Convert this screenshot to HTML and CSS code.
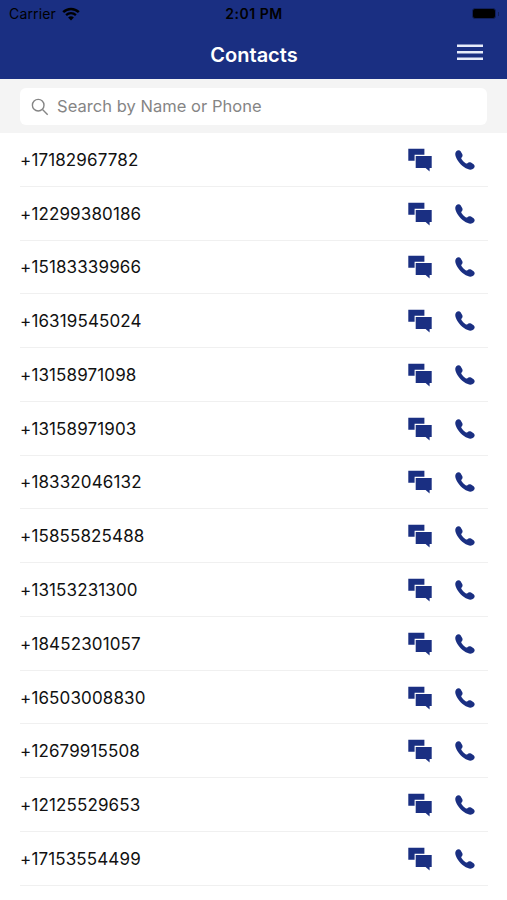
FILE: index.html
```html
<!DOCTYPE html>
<html lang="en">
<head>
  <meta charset="UTF-8" />
  <meta name="viewport" content="width=device-width, initial-scale=1.0"/>
  <title>Contacts</title>
  <link rel="stylesheet" href="styles.css">
</head>
<body>

<!-- Shared row icons -->
<svg class="icon-defs" width="0" height="0">
  <symbol id="icon-chat" viewBox="0 0 24 24">
    <path d="M0.3 0.7H16.4V6.8H6.6V12.8H0.3Z"/>
    <path d="M7.7 7.9H23.7V19.9H21.6V23.6L17.6 19.9H7.7Z"/>
  </symbol>
  <symbol id="icon-phone" viewBox="0 0 20 20">
    <path d="M1.3 1.3C2.6 0 4.6 0 5.6 1.2L7.2 4C8 5.5 7.5 6.8 6.4 7.7C6.1 8.1 6.2 8.5 6.5 9C7.6 10.8 9.2 12.4 11 13.4C11.6 13.7 12 13.7 12.4 13.3C13.3 12.2 14.7 11.9 16 12.6L18.6 14.2C20 15.2 20 17 18.8 18.3C17.3 19.8 15 20 12.8 19.1C7.5 16.9 3 12.3 0.9 7C0 4.8 0 2.7 1.3 1.3Z"/>
  </symbol>
</svg>

<!-- Header -->
<div class="header">
  <div class="status-bar">
    <div class="carrier">
      <span>Carrier</span>
      <svg class="wifi" viewBox="0 0 18 14">
        <path d="M1.2 5.2C5.6 0.9 12.4 0.9 16.8 5.2" fill="none" stroke="#000" stroke-width="2.5"/>
        <path d="M4.1 8.2C6.9 5.5 11.1 5.5 13.9 8.2" fill="none" stroke="#000" stroke-width="2.3"/>
        <path d="M6.1 10.4C7.8 8.9 10.2 8.9 11.9 10.4L9 13.4Z"/>
      </svg>
    </div>
    <div class="time">2:01 PM</div>
    <div class="battery"><span class="level"></span><span class="cap"></span></div>
  </div>
  <div class="nav">
    <div class="title">Contacts</div>
    <svg class="menu" viewBox="0 0 26 17">
      <path d="M0 1.7H26M0 8.2H26M0 14.7H26"/>
    </svg>
  </div>
</div>

<!-- Search -->
<div class="search">
  <div class="search-box">
    <svg class="search-icon" viewBox="0 0 18 18">
      <circle cx="7.2" cy="7.2" r="5.8"/>
      <path d="M11.5 11.5L16.7 16.7"/>
    </svg>
    <span>Search by Name or Phone</span>
  </div>
</div>

<!-- Contact list -->
<div class="contacts">
  <div class="contact"><span>+17182967782</span><svg class="chat"><use href="#icon-chat"/></svg><svg class="phone"><use href="#icon-phone"/></svg></div>
  <div class="contact"><span>+12299380186</span><svg class="chat"><use href="#icon-chat"/></svg><svg class="phone"><use href="#icon-phone"/></svg></div>
  <div class="contact"><span>+15183339966</span><svg class="chat"><use href="#icon-chat"/></svg><svg class="phone"><use href="#icon-phone"/></svg></div>
  <div class="contact"><span>+16319545024</span><svg class="chat"><use href="#icon-chat"/></svg><svg class="phone"><use href="#icon-phone"/></svg></div>
  <div class="contact"><span>+13158971098</span><svg class="chat"><use href="#icon-chat"/></svg><svg class="phone"><use href="#icon-phone"/></svg></div>
  <div class="contact"><span>+13158971903</span><svg class="chat"><use href="#icon-chat"/></svg><svg class="phone"><use href="#icon-phone"/></svg></div>
  <div class="contact"><span>+18332046132</span><svg class="chat"><use href="#icon-chat"/></svg><svg class="phone"><use href="#icon-phone"/></svg></div>
  <div class="contact"><span>+15855825488</span><svg class="chat"><use href="#icon-chat"/></svg><svg class="phone"><use href="#icon-phone"/></svg></div>
  <div class="contact"><span>+13153231300</span><svg class="chat"><use href="#icon-chat"/></svg><svg class="phone"><use href="#icon-phone"/></svg></div>
  <div class="contact"><span>+18452301057</span><svg class="chat"><use href="#icon-chat"/></svg><svg class="phone"><use href="#icon-phone"/></svg></div>
  <div class="contact"><span>+16503008830</span><svg class="chat"><use href="#icon-chat"/></svg><svg class="phone"><use href="#icon-phone"/></svg></div>
  <div class="contact"><span>+12679915508</span><svg class="chat"><use href="#icon-chat"/></svg><svg class="phone"><use href="#icon-phone"/></svg></div>
  <div class="contact"><span>+12125529653</span><svg class="chat"><use href="#icon-chat"/></svg><svg class="phone"><use href="#icon-phone"/></svg></div>
  <div class="contact"><span>+17153554499</span><svg class="chat"><use href="#icon-chat"/></svg><svg class="phone"><use href="#icon-phone"/></svg></div>
</div>

</body>
</html>
```
FILE: styles.css
```css
* { box-sizing: border-box; }

body {
  margin: 0;
  height: 900px;
  overflow: hidden;
  font-family: Inter, 'Liberation Sans', sans-serif;
  background-color: #fff;
  color: #111;
}

.icon-defs { display: none; }

.header {
  height: 79px;
  background-color: #1a2f82;
}

.status-bar {
  display: grid;
  grid-template-columns: 1fr auto 1fr;
  align-items: center;
  height: 27px;
  padding: 0 8px 0 9px;
  color: #000;
  font-size: 14px;
}

.carrier { display: flex; align-items: center; gap: 6px; letter-spacing: 0.15px; }
.wifi { width: 18px; height: 14px; }
.time { font-size: 14px; font-weight: 600; letter-spacing: 0.5px; }

.battery {
  justify-self: end;
  display: flex;
  align-items: center;
  gap: 2px;
}

.level {
  width: 24px;
  height: 11px;
  background-color: #000;
  border: 1px solid #11205c;
  border-radius: 3px;
}

.cap {
  width: 1px;
  height: 4px;
  background-color: #11205c;
}

.nav {
  display: grid;
  grid-template-columns: 1fr auto 1fr;
  align-items: center;
  height: 52px;
  padding: 0 24px 0 25px;
}

.title {
  grid-column: 2;
  padding-top: 4px;
  color: #fff;
  font-size: 20px;
  font-weight: 600;
}

.menu {
  justify-self: end;
  width: 26px;
  height: 17px;
  margin-bottom: 1px;
  stroke: #e6ebfa;
  stroke-width: 2.4;
}

.search {
  height: 54px;
  padding: 9px 20px 8px;
  background-color: #f4f4f4;
}

.search-box {
  display: flex;
  align-items: center;
  gap: 8px;
  height: 37px;
  padding-left: 11px;
  border-radius: 6px;
  background-color: #fff;
  color: #858585;
  font-size: 16.5px;
  letter-spacing: 0.04px;
}

.search-box span { padding-bottom: 1px; }

.search-icon {
  width: 18px;
  height: 18px;
  fill: none;
  stroke: #858585;
  stroke-width: 1.4;
}

.contacts { padding: 0 19px 0 20px; }

.contact {
  display: flex;
  align-items: center;
  height: 53.77px;
  padding-top: 1px;
  border-bottom: 1px solid #f0f0f0;
  font-size: 17px;
  letter-spacing: 0.13px;
}

.contact span { flex: 1; }
.contact svg { fill: #1a2f82; }
.chat { width: 24px; height: 24px; margin-right: 23px; }
.phone { width: 20px; height: 20px; margin-right: 13px; }
```
